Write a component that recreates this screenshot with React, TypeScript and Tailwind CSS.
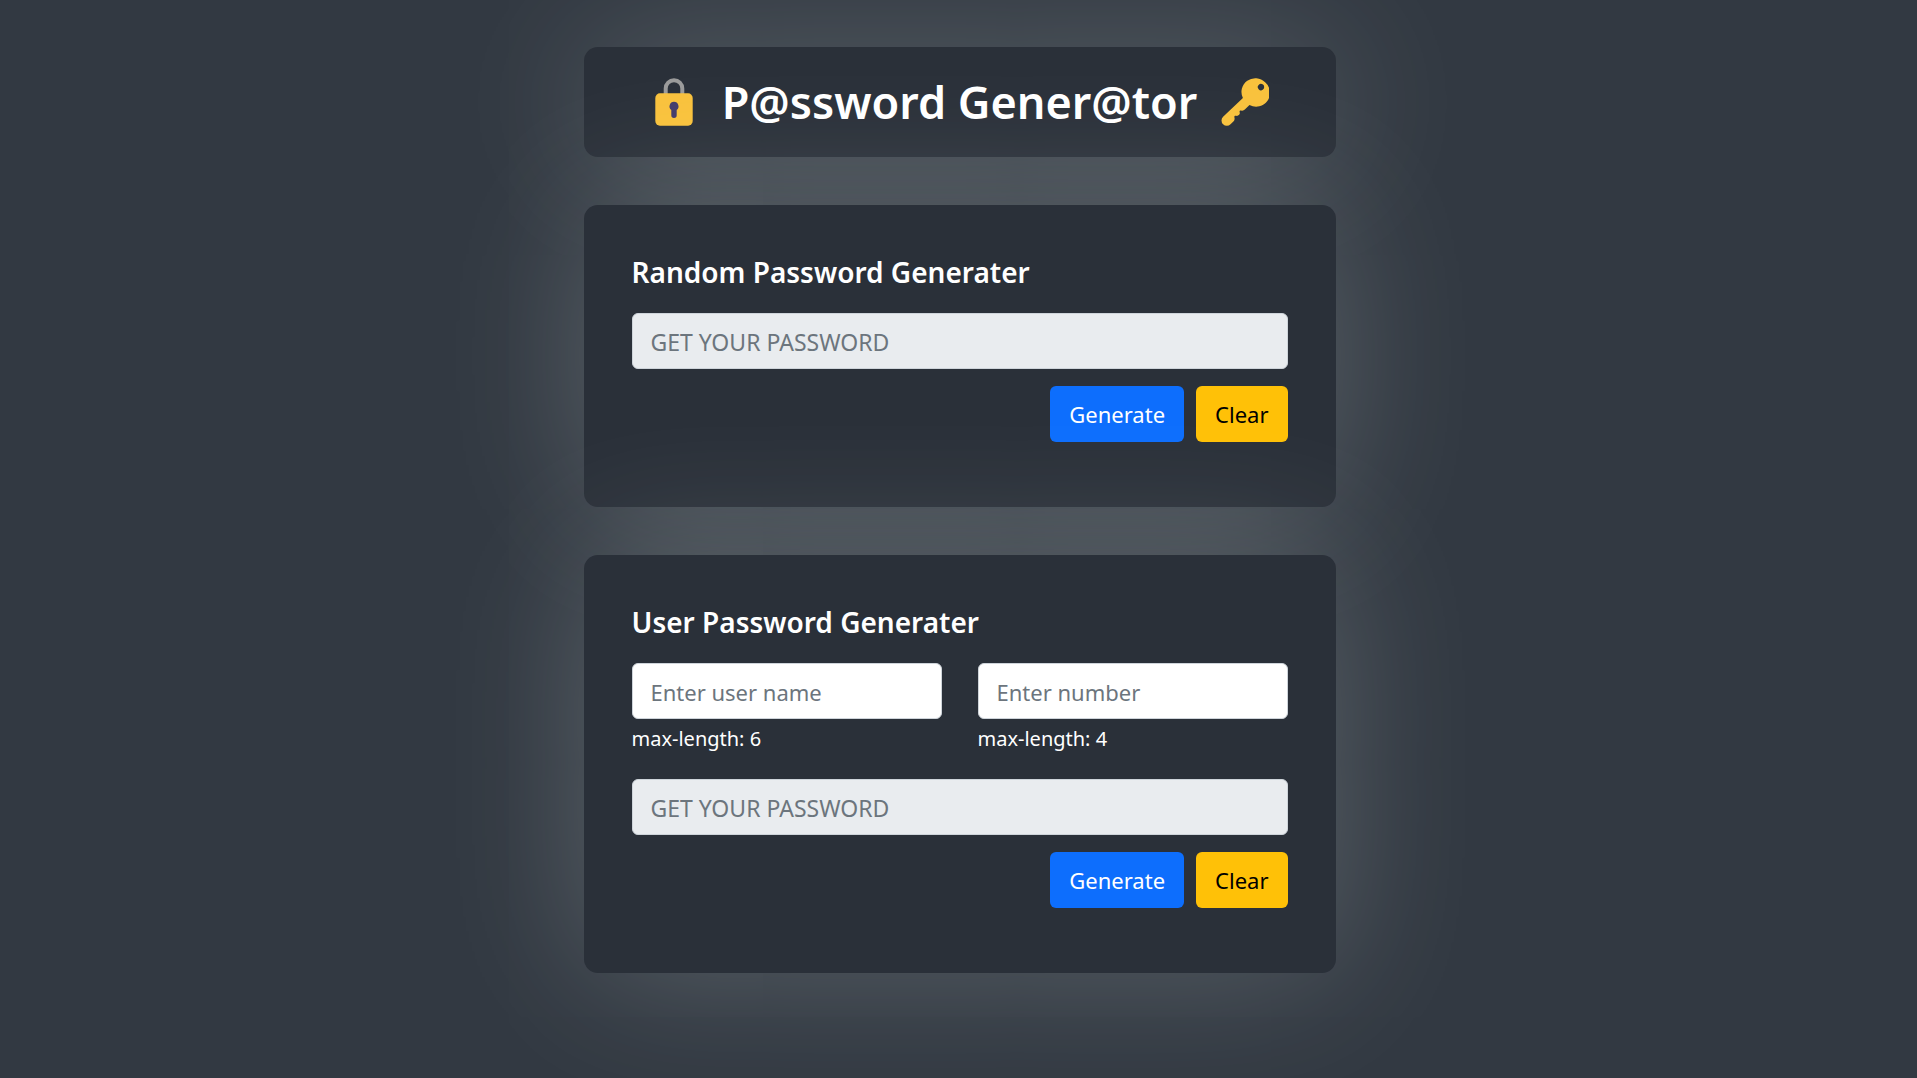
import { type ReactNode, useId, useState } from "react";

const CARD =
  "rounded-[14px] bg-[#2a3039] shadow-[0_0_150px_0_rgba(246,255,250,0.21)]";
const FIELD =
  "block h-14 w-full rounded-md border border-[#ced4da] px-[18px] pt-0.5 text-[#212529] placeholder:text-[#6c757d] outline-none focus:border-[#86b7fe]";

function LockIcon() {
  return (
    <svg viewBox="0 0 48 48" className="size-12 shrink-0" aria-hidden="true">
      <path
        d="M15.7 18V10.5a8.3 8.3 0 0 1 16.6 0V18"
        fill="none"
        stroke="#9b9b9b"
        strokeWidth="4"
      />
      <rect x="5.3" y="15.3" width="37.4" height="32.4" rx="4.6" fill="#f9c23c" />
      <path
        d="M24 23.8a4.5 4.5 0 0 0-2.7 8.1v5.4a2.7 2.7 0 0 0 5.4 0v-5.4a4.5 4.5 0 0 0-2.7-8.1Z"
        fill="#433b6b"
      />
    </svg>
  );
}

function KeyIcon() {
  return (
    <svg viewBox="0 0 48 48" className="size-12 shrink-0" aria-hidden="true">
      <path
        fillRule="evenodd"
        fill="#f9c23c"
        d="M44.1 4.3a13.8 13.8 0 0 0-22.2 15.8L2.1 38.8a5.2 5.2 0 0 0 0 7.5a5.2 5.2 0 0 0 7.4 0l2.9-2.8c1.2-1.2 1.5-2.5 1-4.2c-.3-1 .5-1.8 1.5-1.5c1.3.3 2.3 0 3.2-1c.8-.8.9-1.7.5-2.8c-.3-1 .5-1.8 1.5-1.5c1.5.4 2.7.1 3.7-.9l4.7-4.7A13.8 13.8 0 0 0 44.1 4.3ZM42 11.6a3.2 3.2 0 1 1 0-5a3.2 3.2 0 0 1 0 5Z"
      />
    </svg>
  );
}

function Actions({ onGenerate, onClear }: { onGenerate: () => void; onClear: () => void }) {
  return (
    <div className="mt-[17px] flex justify-end gap-3">
      <button
        type="button"
        onClick={onGenerate}
        className="h-14 cursor-pointer rounded-md bg-[#0d6efd] px-[19px] text-white hover:bg-[#0b5ed7]"
      >
        Generate
      </button>
      <button
        type="button"
        onClick={onClear}
        className="h-14 cursor-pointer rounded-md bg-[#ffc107] px-[19px] text-black hover:bg-[#ffca2c]"
      >
        Clear
      </button>
    </div>
  );
}

function Panel({ title, children }: { title: string; children: ReactNode }) {
  return (
    <section className={`${CARD} px-12 pt-12 pb-[65px]`}>
      <h2 className="mb-[22px] text-[28px] leading-[38px] font-semibold">{title}</h2>
      {children}
    </section>
  );
}

function PasswordOutput({ value }: { value: string }) {
  return (
    <input
      type="text"
      readOnly
      value={value}
      aria-label="Generated password"
      placeholder="GET YOUR PASSWORD"
      className={`${FIELD} bg-[#e9ecef] text-[23px]`}
    />
  );
}

function LimitedField({
  placeholder,
  max,
  value,
  onChange,
}: {
  placeholder: string;
  max: number;
  value: string;
  onChange: (value: string) => void;
}) {
  const id = useId();
  return (
    <div>
      <input
        id={id}
        type="text"
        maxLength={max}
        value={value}
        onChange={(e) => onChange(e.target.value)}
        placeholder={placeholder}
        className={`${FIELD} bg-white`}
      />
      <label htmlFor={id} className="mt-1 block text-xl leading-8">
        max-length: {max}
      </label>
    </div>
  );
}

const CHARS = "ABCDEFGHJKLMNPQRSTUVWXYZabcdefghijkmnpqrstuvwxyz23456789@#$%&";

function randomText(length: number) {
  return Array.from({ length }, () => CHARS[Math.floor(Math.random() * CHARS.length)]).join("");
}

export default function App() {
  const [random, setRandom] = useState("");
  const [name, setName] = useState("");
  const [number, setNumber] = useState("");
  const [custom, setCustom] = useState("");

  return (
    <div className="min-h-screen overflow-hidden bg-[#323942] pt-[47px] pr-4 pb-12 pl-[18px] font-['Noto_Sans',sans-serif] text-[22px] text-white">
      <main className="mx-auto flex max-w-[752px] flex-col gap-12">
        <header className={`${CARD} flex items-center justify-center gap-6 px-6 py-6`}>
          <LockIcon />
          <h1 className="text-[45px] leading-[62px] font-semibold">P@ssword Gener@tor</h1>
          <KeyIcon />
        </header>

        <Panel title="Random Password Generater">
          <PasswordOutput value={random} />
          <Actions onGenerate={() => setRandom(randomText(12))} onClear={() => setRandom("")} />
        </Panel>

        <Panel title="User Password Generater">
          <div className="mb-6 grid grid-cols-1 gap-x-9 gap-y-4 sm:grid-cols-2">
            <LimitedField placeholder="Enter user name" max={6} value={name} onChange={setName} />
            <LimitedField placeholder="Enter number" max={4} value={number} onChange={setNumber} />
          </div>
          <PasswordOutput value={custom} />
          <Actions
            onGenerate={() => setCustom(`${name}${randomText(2)}${number}`)}
            onClear={() => {
              setName("");
              setNumber("");
              setCustom("");
            }}
          />
        </Panel>
      </main>
    </div>
  );
}
